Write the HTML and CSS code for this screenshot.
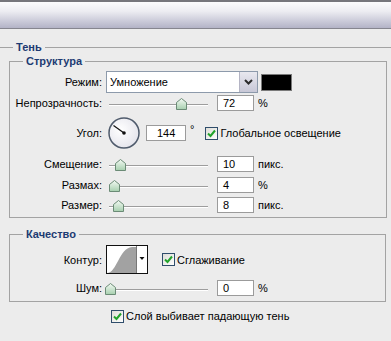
FILE: index.html
```html
<!DOCTYPE html>
<html lang="ru">
<head>
  <meta charset="UTF-8">
  <title>Тень</title>
  <link rel="stylesheet" href="styles.css">
</head>
<body>
  <svg class="defs" width="0" height="0">
    <defs>
      <linearGradient id="thumbFill" x1="0" y1="0" x2="0" y2="1">
        <stop offset="0" stop-color="#f4faf4"/>
        <stop offset="1" stop-color="#a6cfae"/>
      </linearGradient>
      <linearGradient id="checkFill" x1="0" y1="0" x2="1" y2="1">
        <stop offset="0" stop-color="#dcdcd6"/>
        <stop offset="1" stop-color="#ffffff"/>
      </linearGradient>
      <radialGradient id="dialFill" cx="0.4" cy="0.4" r="0.7">
        <stop offset="0" stop-color="#ffffff"/>
        <stop offset="1" stop-color="#e2e2ea"/>
      </radialGradient>
    </defs>
  </svg>

  <div class="titlebar"></div>

  <fieldset class="group group-outer">
    <legend>Тень</legend>

    <fieldset class="group box box-structure">
      <legend>Структура</legend>

      <div class="row row-mode">
        <span class="label">Режим:</span>
        <div class="select">
          <span class="select-text">Умножение</span>
          <span class="select-btn">
            <svg width="9" height="6" viewBox="0 0 9 6"><path d="M1 1 4.5 4.5 8 1" fill="none" stroke="#2b2b2b" stroke-width="2"/></svg>
          </span>
        </div>
        <span class="swatch"></span>
      </div>

      <div class="row">
        <span class="label">Непрозрачность:</span>
        <div class="slider">
          <span class="track"></span>
          <svg class="thumb" style="left: 70px" width="11" height="12" viewBox="0 0 11 12"><path d="M5.5 .5 10.5 4.5V11.5H.5V4.5Z" fill="url(#thumbFill)" stroke="#6b8b76"/></svg>
        </div>
        <span class="field">72</span>
        <span class="unit">%</span>
      </div>

      <div class="row row-angle">
        <span class="label">Угол:</span>
        <svg class="dial" width="32" height="32" viewBox="0 0 32 32">
          <circle cx="16" cy="16" r="15" fill="url(#dialFill)" stroke="#4f5b6c" stroke-width="1.5"/>
          <line x1="16" y1="16" x2="5.5" y2="8.4" stroke="#111" stroke-width="1.2"/>
          <circle cx="16" cy="16" r="1.8" fill="#111"/>
        </svg>
        <span class="field field-angle">144</span>
        <span class="degree">°</span>
        <svg class="check check-global" width="13" height="13" viewBox="0 0 13 13"><rect x=".5" y=".5" width="12" height="12" fill="url(#checkFill)" stroke="#2f4d6b"/><path d="M3 6.5 5.5 9 10 3.5" fill="none" stroke="#22a32b" stroke-width="2"/></svg>
        <span class="check-label">Глобальное освещение</span>
      </div>

      <div class="row row-gap">
        <span class="label">Смещение:</span>
        <div class="slider">
          <span class="track"></span>
          <svg class="thumb" style="left: 9px" width="11" height="12" viewBox="0 0 11 12"><path d="M5.5 .5 10.5 4.5V11.5H.5V4.5Z" fill="url(#thumbFill)" stroke="#6b8b76"/></svg>
        </div>
        <span class="field">10</span>
        <span class="unit">пикс.</span>
      </div>

      <div class="row row-gap">
        <span class="label">Размах:</span>
        <div class="slider">
          <span class="track"></span>
          <svg class="thumb" style="left: 3px" width="11" height="12" viewBox="0 0 11 12"><path d="M5.5 .5 10.5 4.5V11.5H.5V4.5Z" fill="url(#thumbFill)" stroke="#6b8b76"/></svg>
        </div>
        <span class="field">4</span>
        <span class="unit">%</span>
      </div>

      <div class="row">
        <span class="label">Размер:</span>
        <div class="slider">
          <span class="track"></span>
          <svg class="thumb" style="left: 7px" width="11" height="12" viewBox="0 0 11 12"><path d="M5.5 .5 10.5 4.5V11.5H.5V4.5Z" fill="url(#thumbFill)" stroke="#6b8b76"/></svg>
        </div>
        <span class="field">8</span>
        <span class="unit">пикс.</span>
      </div>
    </fieldset>

    <fieldset class="group box box-quality">
      <legend>Качество</legend>

      <div class="row row-contour">
        <span class="label">Контур:</span>
        <svg class="contour" width="42" height="29" viewBox="0 0 42 29">
          <rect x=".5" y=".5" width="41" height="28" fill="#fff" stroke="#111"/>
          <path d="M1 28C11 28 13 3 26 2H30V28Z" fill="#a2a2a2"/>
          <line x1="30.5" y1="1" x2="30.5" y2="28" stroke="#777"/>
          <path d="M33.5 12H38.5L36 15Z" fill="#111"/>
        </svg>
        <svg class="check check-smooth" width="13" height="13" viewBox="0 0 13 13"><rect x=".5" y=".5" width="12" height="12" fill="url(#checkFill)" stroke="#2f4d6b"/><path d="M3 6.5 5.5 9 10 3.5" fill="none" stroke="#22a32b" stroke-width="2"/></svg>
        <span class="check-label">Сглаживание</span>
      </div>

      <div class="row row-noise">
        <span class="label">Шум:</span>
        <div class="slider">
          <span class="track"></span>
          <svg class="thumb" style="left: -1px" width="11" height="12" viewBox="0 0 11 12"><path d="M5.5 .5 10.5 4.5V11.5H.5V4.5Z" fill="url(#thumbFill)" stroke="#6b8b76"/></svg>
        </div>
        <span class="field">0</span>
        <span class="unit">%</span>
      </div>
    </fieldset>

    <div class="row row-knockout">
      <svg class="check" width="13" height="13" viewBox="0 0 13 13"><rect x=".5" y=".5" width="12" height="12" fill="url(#checkFill)" stroke="#2f4d6b"/><path d="M3 6.5 5.5 9 10 3.5" fill="none" stroke="#22a32b" stroke-width="2"/></svg>
      <span class="check-label">Слой выбивает падающую тень</span>
    </div>
  </fieldset>
</body>
</html>
```

FILE: styles.css
```css
body {
  margin: 0;
  background: #ececec;
  font: 11px "Liberation Sans", Arial, sans-serif;
  color: #000;
  overflow: hidden;
}
.defs {
  position: absolute;
}
.titlebar {
  height: 26px;
  border-top: 2px solid #76767c;
  border-bottom: 1px solid #86868f;
  background: linear-gradient(#fbfbfd, #ededf2 35%, #b3b3c7);
}
.group {
  margin: 0;
  padding: 0;
  border: 1px solid #a3a3a3;
  min-width: 0;
}
.group > legend {
  font-weight: bold;
  color: #1d3b72;
  line-height: 13px;
  padding: 0 3px;
  margin-left: 13px;
}
.group-outer {
  border-width: 1px 0 0;
  margin-top: 12px;
}
.box {
  margin: 1px 4px 0 9px;
  padding: 0 0 2px;
}
.box-quality {
  margin: 10px 5px 0 9px;
  padding-bottom: 3px;
}
.row {
  display: flex;
  align-items: center;
  height: 20px;
}
.label {
  width: 92px;
  flex: none;
  text-align: right;
  margin-right: 4px;
}
.row-mode {
  height: 22px;
  margin-top: 3px;
}
.row-angle {
  height: 40px;
}
.row-gap {
  margin-top: 1px;
}
.row-contour {
  height: 29px;
  margin-top: 4px;
}
.row-noise {
  margin-top: 4px;
}
.row-knockout {
  height: 14px;
  margin-top: 7px;
  padding-left: 111px;
}

.select {
  display: flex;
  width: 152px;
  height: 22px;
  box-sizing: border-box;
  border: 1px solid #8d9aab;
  background: #fff;
}
.select-text {
  flex: 1;
  padding-left: 3px;
  line-height: 20px;
}
.select-btn {
  width: 17px;
  display: flex;
  align-items: center;
  justify-content: center;
  border-left: 1px solid #b4b4c4;
  background: linear-gradient(#e8e8ef, #c8c8d7);
}
.swatch {
  width: 31px;
  height: 17px;
  box-sizing: border-box;
  margin-left: 3px;
  background: #000;
  border: 1px solid #7a7a7a;
}

.slider {
  position: relative;
  flex: none;
  width: 107px;
  height: 20px;
  margin-right: 4px;
}
.track {
  position: absolute;
  left: 3px;
  right: 5px;
  top: 11px;
  border-top: 1px solid #9d9d9d;
  border-bottom: 1px solid #fff;
}
.thumb {
  position: absolute;
  top: 5px;
}

.field {
  width: 37px;
  height: 16px;
  box-sizing: border-box;
  padding-left: 5px;
  line-height: 14px;
  background: #fff;
  border: 1px solid #9b9b9b;
}
.unit {
  margin-left: 4px;
}

.dial {
  margin-left: 2px;
  flex: none;
}
.field-angle {
  width: 40px;
  margin-left: 6px;
  padding-left: 10px;
}
.degree {
  margin: -8px 0 0 4px;
}

.check {
  flex: none;
}
.check-global {
  margin-left: 11px;
}
.check-label {
  margin-left: 2px;
  white-space: nowrap;
}
.contour {
  flex: none;
}
.check-smooth {
  margin-left: 14px;
}
```
